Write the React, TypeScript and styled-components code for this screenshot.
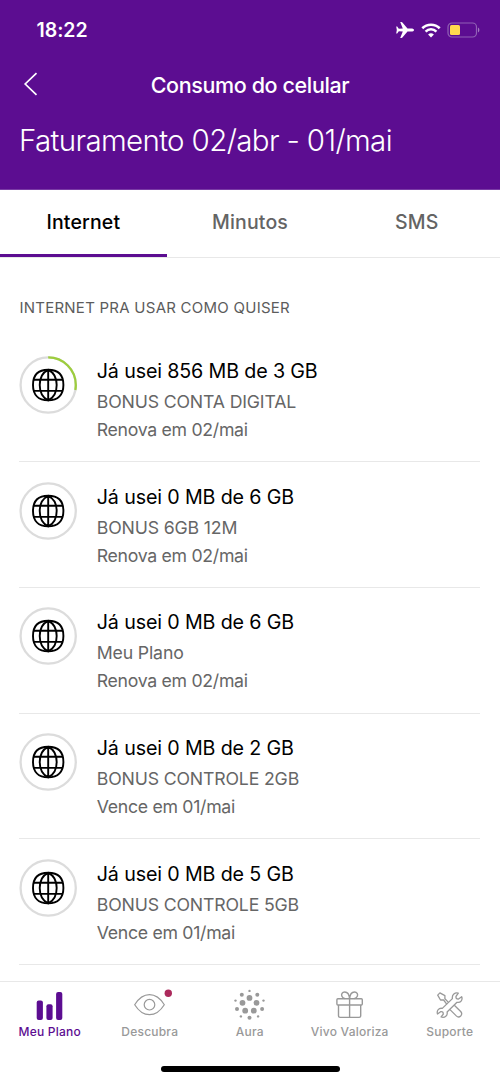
import React from "react";
import styled, { createGlobalStyle } from "styled-components";

const purple = "#5c0d91";

const GlobalStyle = createGlobalStyle`
  * { box-sizing: border-box; }
  body { margin: 0; background: #fff; }
`;

const Screen = styled.div`
  width: 500px;
  height: 1082px;
  display: flex;
  flex-direction: column;
  overflow: hidden;
  background: #fff;
  color: #000;
  font-family: Inter, "Liberation Sans", sans-serif;
`;

const Header = styled.header`
  flex: none;
  height: 190px;
  background: ${purple};
  border-bottom: 1px solid #7a3ba5;
  color: #fff;
`;

const StatusBar = styled.div`
  display: flex;
  align-items: center;
  justify-content: space-between;
  height: 60px;
  padding: 0 20px 0 36.5px;
`;

const Clock = styled.span`
  font-size: 19.5px;
  font-weight: 600;
  letter-spacing: -0.05px;
`;

const StatusIcons = styled.div`
  display: flex;
  align-items: center;
`;

const NavBar = styled.div`
  display: grid;
  grid-template-columns: 60px 1fr 60px;
  align-items: center;
  height: 50px;
`;

const BackButton = styled.button`
  display: flex;
  height: 50px;
  padding: 12px 0 0 23px;
  border: 0;
  background: none;
`;

const NavTitle = styled.h1`
  margin: 0;
  text-align: center;
  font-size: 21.5px;
  line-height: 50px;
  font-weight: 500;
  letter-spacing: -0.38px;
`;

const Period = styled.h2`
  margin: 8px 0 0 19px;
  font-size: 29.5px;
  line-height: 44px;
  font-weight: 300;
  letter-spacing: -0.65px;
  white-space: nowrap;
`;

const Tabs = styled.nav`
  flex: none;
  display: grid;
  grid-template-columns: repeat(3, 1fr);
  height: 68px;
  border-bottom: 1px solid #e8e8e8;
`;

const Tab = styled.div<{ $active?: boolean }>`
  height: 67px;
  line-height: 64px;
  text-align: center;
  font-size: 19.5px;
  font-weight: 500;
  letter-spacing: 0.15px;
  color: ${(p) => (p.$active ? "#000" : "#646464")};
  border-bottom: ${(p) => (p.$active ? `3px solid ${purple}` : "0")};
`;

const Content = styled.main`
  flex: 1;
  min-height: 0;
  overflow: hidden;
  padding: 39px 20px 0 19.4px;
`;

const SectionTitle = styled.h3`
  margin: 0 0 18.5px;
  font-size: 15px;
  line-height: 21px;
  font-weight: 400;
  letter-spacing: 0.25px;
  color: #5c5c5c;
`;

const Row = styled.article`
  display: flex;
  height: 125.7px;
  padding-top: 19.5px;
  border-bottom: 1px solid #e8e8e8;
`;

const Ring = styled.svg`
  flex: none;
  width: 58px;
  height: 58px;
  margin-right: 19.4px;
`;

const Details = styled.div`
  flex: 1;
  white-space: nowrap;
`;

const Usage = styled.div`
  margin-top: 1px;
  font-size: 19.7px;
  line-height: 28px;
  font-weight: 400;
  letter-spacing: -0.15px;
`;

const Note = styled.div`
  margin-top: 3px;
  font-size: 17.7px;
  line-height: 28px;
  letter-spacing: -0.16px;
  color: #666;
`;

const DueNote = styled(Note)`
  margin-top: 0;
  letter-spacing: -0.3px;
`;

const TabBar = styled.footer`
  flex: none;
  height: 101px;
  border-top: 1px solid #e8e8e8;
`;

const TabItems = styled.div`
  display: grid;
  grid-template-columns: repeat(5, 1fr);
  height: 83px;
`;

const TabItem = styled.div<{ $active?: boolean }>`
  display: flex;
  flex-direction: column;
  align-items: center;
  padding: 6px 0.5px 0 0;
  color: ${(p) => (p.$active ? purple : "#999")};
  font-size: 12px;
  line-height: 18px;
  font-weight: 500;
  letter-spacing: 0.22px;
  white-space: nowrap;
`;

const TabIcon = styled.svg.attrs({ width: 36, height: 35, viewBox: "0.5 0 36 35" })`
  display: block;
  margin-right: -0.5px;
  overflow: visible;
`;

const HomeIndicator = styled.div`
  width: 179px;
  height: 6px;
  margin: 1px auto 0;
  border-radius: 3px;
  background: #000;
`;

const PlaneIcon = () => (
  <svg width="18" height="16" viewBox="0 0 18 16" fill="#fff">
    <path d="M18 8C18 7 16.7 6.5 15.3 6.5H11.5L6.4 .4Q6.1 0 5.5 0H4.2L6.8 6.5L2.8 6.7L1.2 4.4H.2L.8 8L.2 11.6H1.2L2.8 9.3L6.8 9.5L4.2 16H5.5Q6.1 16 6.4 15.6L11.5 9.5H15.3C16.7 9.5 18 9 18 8Z" />
  </svg>
);

const SpacedIcon = styled.svg`
  margin-left: 6.5px;
`;

const WifiIcon = () => (
  <SpacedIcon width="20" height="15" viewBox="0 0 20 15" fill="none" stroke="#fff">
    <path d="M1.3 5.3A12.4 12.4 0 0 1 18.7 5.3" strokeWidth="2.6" />
    <path d="M4.6 8.6A7.6 7.6 0 0 1 15.4 8.6" strokeWidth="2.5" />
    <path d="M10 14.5L7.1 11.6A4.1 4.1 0 0 1 12.9 11.6Z" fill="#fff" stroke="none" />
  </SpacedIcon>
);

const BatteryIcon = () => (
  <SpacedIcon width="33" height="16" viewBox="0 0 33 16">
    <rect x="1" y="1" width="28.5" height="14" rx="4" fill="none" stroke="#9061b5" strokeWidth="1.2" />
    <rect x="3" y="3" width="10" height="10" rx="1.5" fill="#ffd84e" />
    <path d="M31 5.5Q32.4 6.3 32.4 8T31 10.5Z" fill="#a27cc0" />
  </SpacedIcon>
);

function UsageRing({ used }: { used: number }) {
  const length = 2 * Math.PI * 27.6;
  return (
    <Ring viewBox="-29.2 -29 58 58" fill="none">
      <circle r="27.6" stroke="#dcdcdc" strokeWidth="2.3" />
      {used > 0 && (
        <circle
          r="27.6"
          stroke="#9dcd3d"
          strokeWidth="2.3"
          strokeDasharray={`${length * used} ${length}`}
          transform="rotate(-90)"
        />
      )}
      <g stroke="#000" strokeWidth="1.9">
        <path d="M0 -15.2C9.8 -15.2 15.2 -9.8 15.2 0S9.8 15.4 0 15.4S-15.2 9.8 -15.2 0S-9.8 -15.2 0 -15.2Z" />
        <path d="M0 -15.2C-11.3 -10 -11.3 10 0 15.4C11.3 10 11.3 -10 0 -15.2ZM0 -15.2V15.2M-14.4 -5.2H14.4M-14.4 5.9H14.4" />
      </g>
    </Ring>
  );
}

const BarsIcon = () => (
  <TabIcon fill="currentColor">
    <rect x="5.2" y="12.5" width="6.2" height="19.5" rx="2" />
    <rect x="14.9" y="16.2" width="6.2" height="15.8" rx="2" />
    <rect x="24.6" y="4" width="6.2" height="28" rx="2" />
  </TabIcon>
);

const EyeIcon = () => (
  <TabIcon fill="none" stroke="currentColor" strokeWidth="1.2">
    <path d="M3.2 16.7Q9.5 6.7 18 6.7T32.8 16.7Q26.5 26.7 18 26.7T3.2 16.7Z" />
    <circle cx="18" cy="16.7" r="5.3" />
    <circle cx="36.8" cy="5.3" r="3.7" fill="#ac2a5c" stroke="none" />
  </TabIcon>
);

const auraDots = [
  [18, 2.9, 1.2], [10.3, 6.7, 2], [25.8, 6.7, 2], [18, 9.9, 2.9],
  [4, 12.6, 1.2], [32, 12.6, 1.2], [11, 14.8, 2.9], [25, 14.8, 2.9],
  [5.5, 21, 2], [30.6, 21, 2], [13.7, 22.7, 2.9], [22.3, 22.7, 2.9],
  [9.4, 28.4, 1.2], [26.6, 28.4, 1.2], [18, 29.7, 2],
];

const AuraIcon = () => (
  <TabIcon fill="currentColor">
    {auraDots.map(([x, y, r]) => <circle key={`${x}-${y}`} cx={x} cy={y} r={r} />)}
  </TabIcon>
);

const GiftIcon = () => (
  <TabIcon fill="none" stroke="currentColor" strokeWidth="1.4">
    <rect x="5.4" y="10.8" width="25.4" height="6.2" rx="1" />
    <path d="M7 17V27.8Q7 29.4 8.6 29.4H27.6Q29.2 29.4 29.2 27.8V17M18.1 10.8V29.4" />
    <path d="M18.1 10.8C17.7 5.8 15.6 4 13.2 4C10.7 4 9.5 6.3 10.4 8.3C11 9.7 12.2 10.3 13.2 10.5M18.1 10.8C18.5 5.8 20.6 4 23 4C25.5 4 26.7 6.3 25.8 8.3C25.2 9.7 24 10.3 23 10.5" />
  </TabIcon>
);

const ToolsIcon = () => (
  <TabIcon fill="none" stroke="currentColor" strokeWidth="1.3" strokeLinejoin="round">
    <path d="M17.2 14.6L13.4 10.8V7.6L8.4 4.9L6.2 7.1L9 12H12.1L15.4 16.3" />
    <path d="M22.8 17.3L29.2 23.5Q31.2 25.8 29.2 28Q27 30 24.8 27.9L18.5 21.6" />
    <path d="M26.8 5.2C23.5 4.2 20.2 6.8 20.9 10.6L10.8 20.4C7.4 19.6 4.9 22.6 6 26L9.1 23.7Q11.8 23.2 11.8 26.2L9.6 29C13.4 30.1 16.4 27.6 15.6 24L25.5 14.3C29 15.1 31.4 12 30.2 8.7L27 11.1Q24.2 11.3 24.5 8.4Z" />
  </TabIcon>
);

const plans = [
  { usage: "Já usei 856 MB de 3 GB", name: "BONUS CONTA DIGITAL", due: "Renova em 02/mai", used: 856 / 3072 },
  { usage: "Já usei 0 MB de 6 GB", name: "BONUS 6GB 12M", due: "Renova em 02/mai", used: 0 },
  { usage: "Já usei 0 MB de 6 GB", name: "Meu Plano", due: "Renova em 02/mai", used: 0 },
  { usage: "Já usei 0 MB de 2 GB", name: "BONUS CONTROLE 2GB", due: "Vence em 01/mai", used: 0 },
  { usage: "Já usei 0 MB de 5 GB", name: "BONUS CONTROLE 5GB", due: "Vence em 01/mai", used: 0 },
];

export default function App() {
  return (
    <Screen>
      <GlobalStyle />
      <Header>
        <StatusBar>
          <Clock>18:22</Clock>
          <StatusIcons>
            <PlaneIcon />
            <WifiIcon />
            <BatteryIcon />
          </StatusIcons>
        </StatusBar>
        <NavBar>
          <BackButton aria-label="Voltar">
            <svg width="15" height="24" viewBox="0 0 15 24" fill="none" stroke="#fff" strokeWidth="1.7">
              <path d="M13.5 1.2L2.2 12L13.5 22.8" />
            </svg>
          </BackButton>
          <NavTitle>Consumo do celular</NavTitle>
        </NavBar>
        <Period>Faturamento 02/abr - 01/mai</Period>
      </Header>
      <Tabs>
        <Tab $active>Internet</Tab>
        <Tab>Minutos</Tab>
        <Tab>SMS</Tab>
      </Tabs>
      <Content>
        <SectionTitle>INTERNET PRA USAR COMO QUISER</SectionTitle>
        {plans.map((plan) => (
          <Row key={plan.usage + plan.name}>
            <UsageRing used={plan.used} />
            <Details>
              <Usage>{plan.usage}</Usage>
              <Note>{plan.name}</Note>
              <DueNote>{plan.due}</DueNote>
            </Details>
          </Row>
        ))}
      </Content>
      <TabBar>
        <TabItems>
          <TabItem $active><BarsIcon />Meu Plano</TabItem>
          <TabItem><EyeIcon />Descubra</TabItem>
          <TabItem><AuraIcon />Aura</TabItem>
          <TabItem><GiftIcon />Vivo Valoriza</TabItem>
          <TabItem><ToolsIcon />Suporte</TabItem>
        </TabItems>
        <HomeIndicator />
      </TabBar>
    </Screen>
  );
}
